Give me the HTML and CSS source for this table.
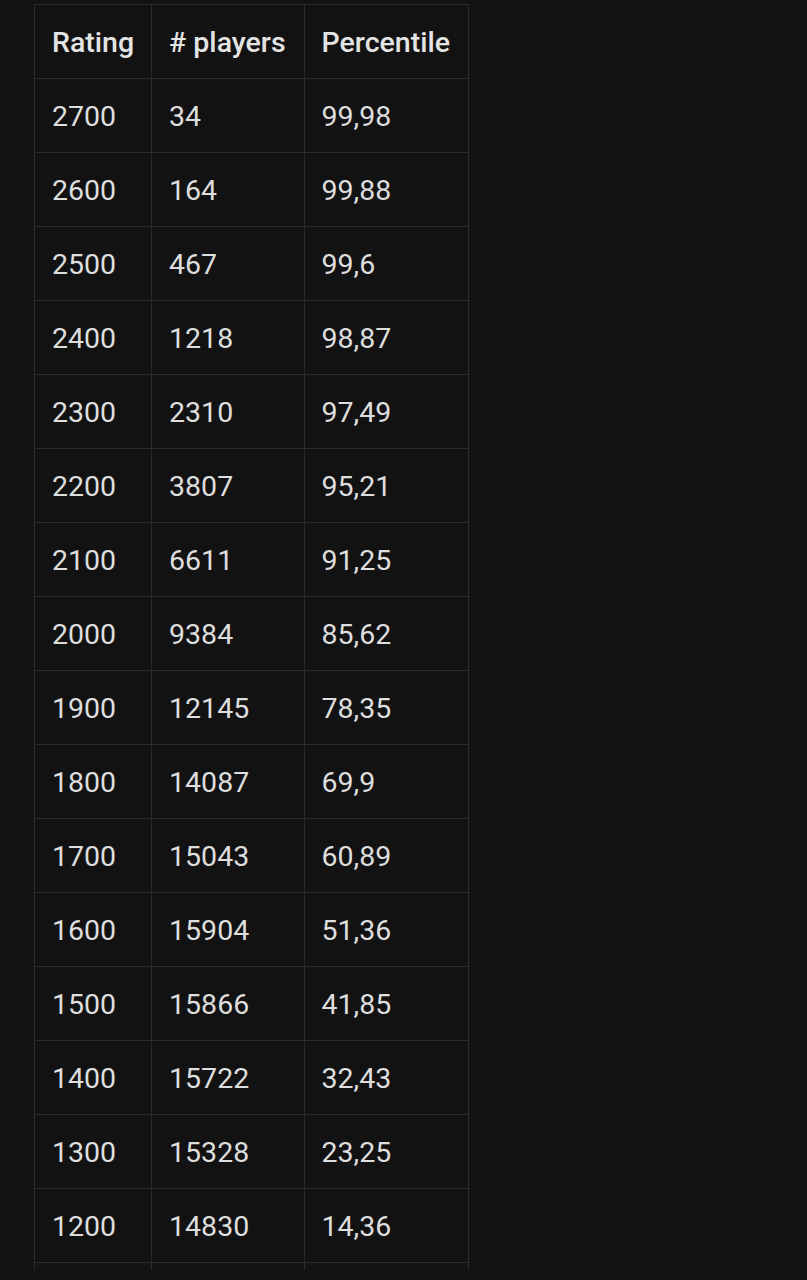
FILE: index.html
```html
<!DOCTYPE html>
<html>
<head>
<meta charset="utf-8">
<link rel="stylesheet" href="styles.css">
</head>
<body>
<div class="viewport">
<table class="ratings">
<thead>
<tr><th>Rating</th><th># players</th><th>Percentile</th></tr>
</thead>
<tbody>
<tr><td>2700</td><td>34</td><td>99,98</td></tr>
<tr><td>2600</td><td>164</td><td>99,88</td></tr>
<tr><td>2500</td><td>467</td><td>99,6</td></tr>
<tr><td>2400</td><td>1218</td><td>98,87</td></tr>
<tr><td>2300</td><td>2310</td><td>97,49</td></tr>
<tr><td>2200</td><td>3807</td><td>95,21</td></tr>
<tr><td>2100</td><td>6611</td><td>91,25</td></tr>
<tr><td>2000</td><td>9384</td><td>85,62</td></tr>
<tr><td>1900</td><td>12145</td><td>78,35</td></tr>
<tr><td>1800</td><td>14087</td><td>69,9</td></tr>
<tr><td>1700</td><td>15043</td><td>60,89</td></tr>
<tr><td>1600</td><td>15904</td><td>51,36</td></tr>
<tr><td>1500</td><td>15866</td><td>41,85</td></tr>
<tr><td>1400</td><td>15722</td><td>32,43</td></tr>
<tr><td>1300</td><td>15328</td><td>23,25</td></tr>
<tr><td>1200</td><td>14830</td><td>14,36</td></tr>
<tr class="clipped"><td></td><td></td><td></td></tr>
</tbody>
</table>
</div>
</body>
</html>
```
FILE: styles.css
```css
html, body {
  margin: 0;
  padding: 0;
  background: #121212;
}
body {
  font-family: Roboto, "Noto Sans", sans-serif;
  color: #dedede;
}
.viewport {
  height: 1270px;
  overflow: hidden;
  padding: 4px 0 0 34px;
  box-sizing: border-box;
}
.ratings {
  border-collapse: collapse;
  background: #121212;
}
.ratings th,
.ratings td {
  border: 1px solid #2b2b2b;
  padding: 21px 18px 19px 17px;
  font-size: 28.5px;
  line-height: 33px;
  text-align: left;
  white-space: nowrap;
}
.ratings th:first-child,
.ratings td:first-child {
  padding-right: 17px;
}
.ratings th {
  font-weight: 500;
  color: #e4e4e4;
}
.ratings td {
  font-weight: 400;
}
.ratings .clipped td {
  height: 33px;
}
```
